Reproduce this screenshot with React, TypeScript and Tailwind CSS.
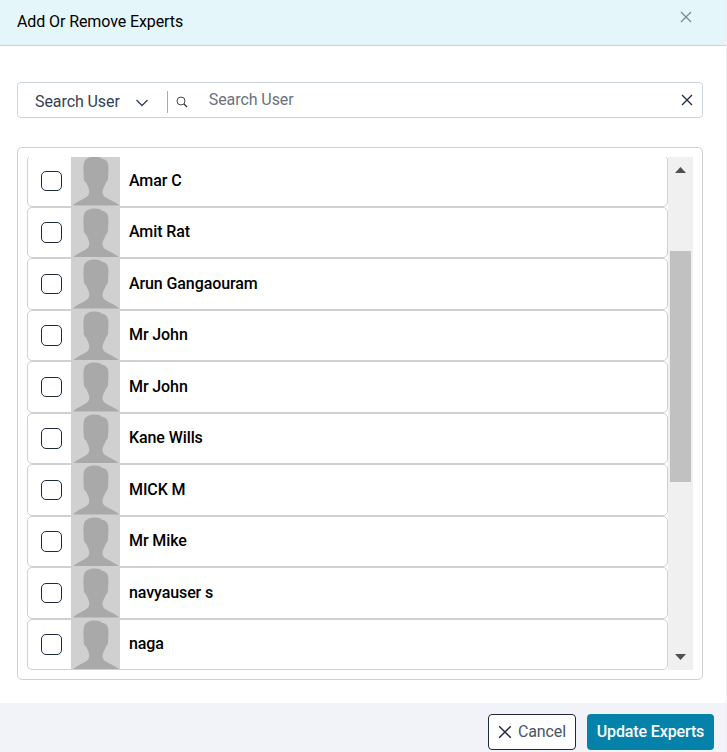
import { useState } from 'react';

const experts = [
  { id: 1, name: 'Amar C' },
  { id: 2, name: 'Amit Rat' },
  { id: 3, name: 'Arun Gangaouram' },
  { id: 4, name: 'Mr John' },
  { id: 5, name: 'Mr John' },
  { id: 6, name: 'Kane Wills' },
  { id: 7, name: 'MICK M' },
  { id: 8, name: 'Mr Mike' },
  { id: 9, name: 'navyauser s' },
  { id: 10, name: 'naga' },
];

function CloseIcon({ className }: { className?: string }) {
  return (
    <svg viewBox="0 0 12 12" className={className} fill="none" stroke="currentColor" strokeWidth="1.25">
      <path d="M1 1 11 11M11 1 1 11" />
    </svg>
  );
}

function Avatar() {
  return (
    <svg viewBox="0 0 49 49" className="w-[49px] h-full shrink-0 bg-[#d0d0d0]" preserveAspectRatio="none">
      <path
        fill="#a9a9a9"
        d="M2 49C4 46.500 8 44.500 12.500 42.200C16.500 40.500 18.300 38.500 18.300 35.500C18.300 32 16.500 30 15.300 26.500C13.500 25.500 12.300 22.500 12.800 20C12.300 16 12.200 10 13 6.500C14.200 2.300 18.500 .6 24 .6C27.500 .6 29.500 1.300 30.800 2.800C34.800 3 37 6 37.300 9.500C37.500 13 37.500 17 37 20C37.500 22.500 36.500 25.500 34.800 26.500C33.800 30 31.500 32 31.500 35.500C31.500 38.500 33 40.500 37 42.200C41.500 44.500 46 46.500 48.300 49Z"
      />
    </svg>
  );
}

function ExpertRow({ name, checked, onToggle }: { name: string; checked: boolean; onToggle: () => void }) {
  return (
    <label className="flex items-center h-[51.5px] shrink-0 border border-[#d0d0d0] rounded-[5px] bg-white">
      <input
        type="checkbox"
        checked={checked}
        onChange={onToggle}
        className="appearance-none w-[21px] h-[20.5px] ml-[13px] mr-[9px] shrink-0 rounded-[5px] border border-[#1e293b] bg-white checked:bg-[#0582aa]"
      />
      <Avatar />
      <span className="ml-[9px] pb-[0.5px] text-base leading-6 font-medium text-black">{name}</span>
    </label>
  );
}

export default function App() {
  const [selected, setSelected] = useState<number[]>([]);
  const [query, setQuery] = useState('');

  const toggle = (id: number) =>
    setSelected((prev) => (prev.includes(id) ? prev.filter((item) => item !== id) : [...prev, id]));

  return (
    <div className="flex flex-col w-[727px] h-[752px] overflow-hidden border-r border-[#f0f0f2] bg-white font-[Roboto,sans-serif] tracking-[-0.1px]">
      <header className="flex justify-between h-[46px] shrink-0 border-b border-[#c9d2d8] bg-[#e4f6fa] pl-[17px] pr-[34px]">
        <h1 className="mt-[10px] text-base leading-6 text-black">Add Or Remove Experts</h1>
        <button aria-label="Close" className="mt-[10.5px] h-3 text-[#80888c]">
          <CloseIcon className="w-3 h-3" />
        </button>
      </header>

      <main className="flex flex-col flex-1 min-h-0 pl-[17px] pr-[23px]">
        <div className="flex items-center h-9 mt-9 shrink-0 border border-[#cbd5e1] rounded pl-[17px] pr-[9.5px]">
          <button className="flex items-center mt-[3px] text-base leading-6 tracking-[-0.08px] text-[#334155]">
            Search User
            <svg viewBox="0 0 12 8" className="w-3 h-2 ml-4 mt-[2px]" fill="none" stroke="currentColor" strokeWidth="1.3">
              <path d="m.5 1 5.500 5.500L11.500 1" />
            </svg>
          </button>
          <span className="w-px h-[22px] ml-[19px] mt-[3px] bg-[#aaa]" />
          <svg viewBox="0 0 12 12" className="w-3 h-3 ml-[8px] mt-[4px] text-[#333]" fill="none" stroke="currentColor">
            <circle cx="5" cy="5" r="4" strokeWidth=".9" />
            <path d="m8 8 3 3" strokeWidth="1.200" />
          </svg>
          <input
            value={query}
            onChange={(e) => setQuery(e.target.value)}
            placeholder="Search User"
            className="flex-1 min-w-0 ml-[21px] mb-px text-base leading-6 tracking-[-0.08px] outline-none placeholder:text-[#6b7280]"
          />
          <button aria-label="Clear search" onClick={() => setQuery('')} className="h-3 text-[#1e293b]">
            <CloseIcon className="w-3 h-3" />
          </button>
        </div>

        <div className="mt-[29px] h-[533px] shrink-0 border border-[#d0d0d0] rounded-[5px] p-[9px]">
          <div className="flex h-[513px] overflow-hidden">
            <div className="flex flex-col justify-end flex-1">
              {experts.map((expert) => (
                <ExpertRow
                  key={expert.id}
                  name={expert.name}
                  checked={selected.includes(expert.id)}
                  onToggle={() => toggle(expert.id)}
                />
              ))}
            </div>
            <div className="flex flex-col items-start w-[25px] shrink-0 bg-[#f0f0f0]">
              <svg viewBox="0 0 11 6" className="w-[11px] h-1.5 ml-[7px] mt-[10px]" fill="#505050">
                <path d="M5.500 0 11 6H0Z" />
              </svg>
              <div className="w-[21px] h-[231px] ml-[2px] mt-[78px] bg-[#c1c1c1]" />
              <svg viewBox="0 0 11 6" className="w-[11px] h-1.5 ml-[7px] mt-auto mb-[10px]" fill="#505050">
                <path d="M0 0h11L5.500 6Z" />
              </svg>
            </div>
          </div>
        </div>
      </main>

      <footer className="flex justify-end items-start gap-[11px] h-[49px] shrink-0 bg-[#f2f3f8] pt-[11px] pr-3">
        <button className="flex items-center justify-center w-[88px] h-9 border border-[#1e293b] rounded bg-white text-base tracking-[-0.1px] text-[#475569]">
          <CloseIcon className="w-[14px] h-[14px] mr-[6px] mb-px text-[#1e293b]" />
          Cancel
        </button>
        <button className="w-[127px] h-9 rounded bg-[#0582aa] text-base font-medium tracking-[-0.13px] text-white whitespace-nowrap">
          Update Experts
        </button>
      </footer>
    </div>
  );
}
